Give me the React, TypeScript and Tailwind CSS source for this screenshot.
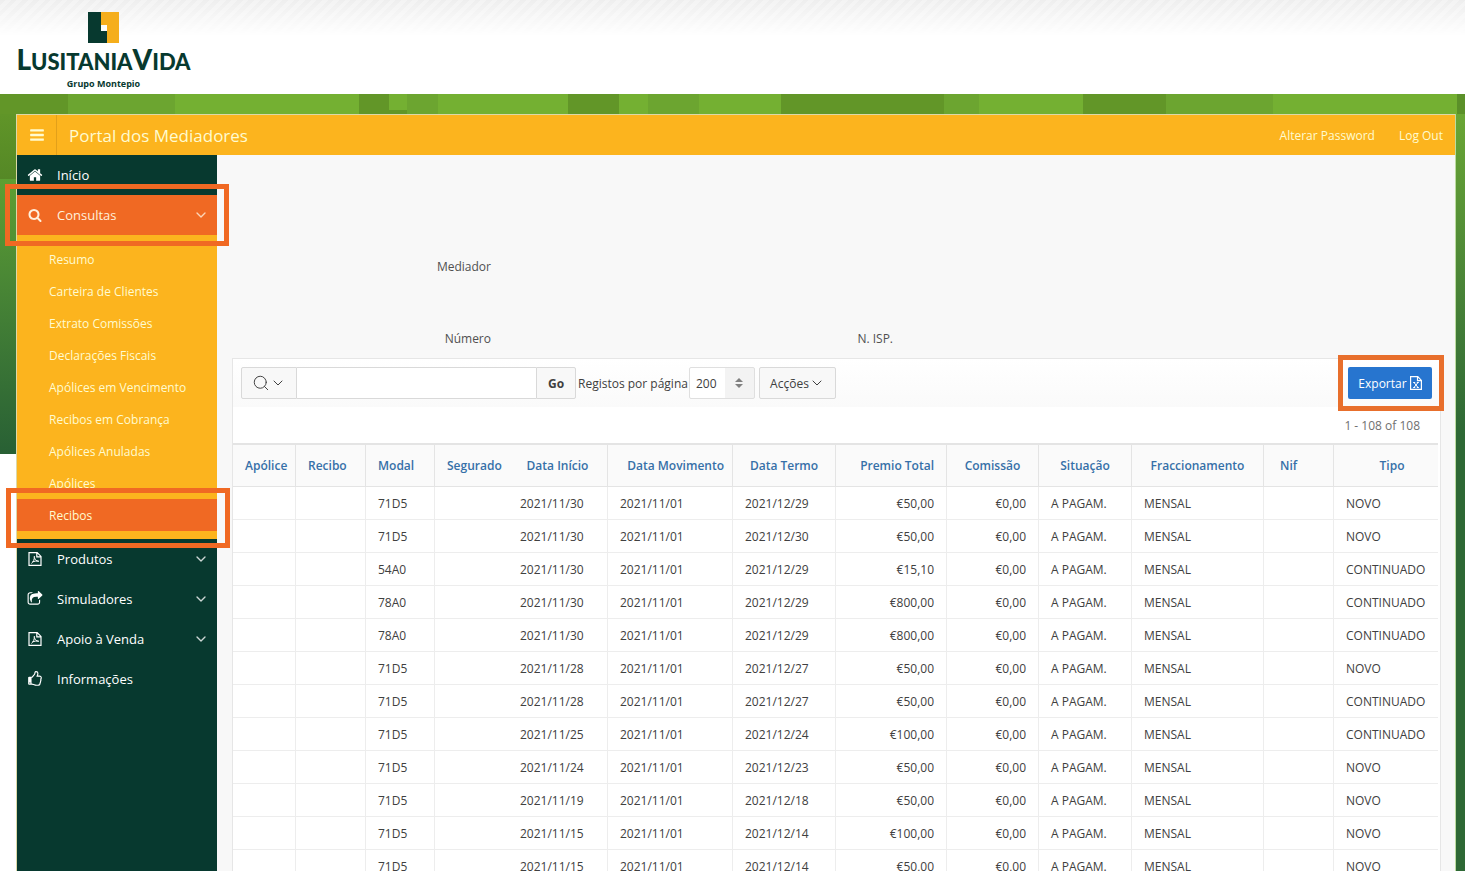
import React from 'react';
import { ChevronDown, Search } from 'lucide-react';

const ICONS = {
  home: 'M1472 992v480q0 26-19 45t-45 19h-384v-384h-256v384h-384q-26 0-45-19t-19-45v-480q0-1 .5-3t.5-3l575-474 575 474q1 2 1 6zm223-69l-62 74q-8 9-21 11h-3q-13 0-21-7l-692-577-692 577q-12 8-24 7-13-2-21-11l-62-74q-8-10-7-23.5t11-21.5l719-599q32-26 76-26t76 26l244 204v-195q0-14 9-23t23-9h192q14 0 23 9t9 23v408l219 182q10 8 11 21.5t-7 23.5z',
  search: 'M1216 832q0-185-131.5-316.5t-316.5-131.5-316.5 131.5-131.5 316.5 131.5 316.5 316.5 131.5 316.5-131.5 131.5-316.5zm512 832q0 52-38 90t-90 38q-54 0-90-38l-343-342q-179 124-399 124-143 0-273.5-55.5t-225-150-150-225-55.5-273.5 55.5-273.5 150-225 225-150 273.5-55.5 273.5 55.5 225 150 150 225 55.5 273.5q0 220-124 399l343 343q37 37 37 90z',
  bars: 'M1664 1344v128q0 26-19 45t-45 19h-1408q-26 0-45-19t-19-45v-128q0-26 19-45t45-19h1408q26 0 45 19t19 45zm0-512v128q0 26-19 45t-45 19h-1408q-26 0-45-19t-19-45v-128q0-26 19-45t45-19h1408q26 0 45 19t19 45zm0-512v128q0 26-19 45t-45 19h-1408q-26 0-45-19t-19-45v-128q0-26 19-45t45-19h1408q26 0 45 19t19 45z',
  share: 'M1472 989v259q0 119-84.5 203.5t-203.5 84.5h-832q-119 0-203.5-84.5t-84.5-203.5v-832q0-119 84.5-203.5t203.5-84.5h255q13 0 22.5 9.5t9.5 22.5q0 27-26 32-77 26-133 60-10 4-16 4h-112q-66 0-113 47t-47 113v832q0 66 47 113t113 47h832q66 0 113-47t47-113v-214q0-19 18-29 28-13 54-37 16-16 35-8 21 9 21 29zm237-496l-384 384q-18 19-45 19-12 0-25-5-39-17-39-59v-192h-160q-323 0-438 131-119 137-74 473 3 23-20 34-8 2-12 2-16 0-26-13-10-14-21-31t-39.5-68.5-49.5-99.5-38.5-114-17.5-122q0-49 3.5-91t14-90 28-88 47-81.5 68.5-74 94.5-61.5 124.5-48.5 159.5-30.5 196.5-11h160v-192q0-42 39-59 13-5 25-5 26 0 45 19l384 384q19 19 19 45t-19 45z',
  thumb: 'M384 1344q0-26-19-45t-45-19-45 19-19 45 19 45 45 19 45-19 19-45zm1152-576q0-51-39-89.5t-89-38.5h-352q0-58 48-159.5t48-160.5q0-98-32-145t-128-47q-26 26-38 85t-30.5 125.5-59.5 109.5q-22 23-77 91-4 5-23 30t-31.5 41-34.5 42.5-40 44-38.5 35.5-40 27-35.5 9h-32v640h32q13 0 31.5 3t33 6.5 38 11 35 11.5 35.5 12.5 29 10.5q211 73 342 73h121q192 0 192-167 0-26-5-56 30-16 47.5-52.5t17.5-73.5-18-69q53-50 53-119 0-25-10-55.5t-25-47.5q32-1 53.5-47t21.5-81zm128-1q0 89-49 163 9 33 9 69 0 77-38 144 3 21 3 43 0 101-60 178 1 139-85 219.5t-227 80.5h-129q-96 0-189.5-22.5t-216.5-65.5q-116-40-138-40h-288q-53 0-90.5-37.5t-37.5-90.5v-640q0-53 37.5-90.5t90.5-37.5h274q36-24 137-155 58-75 107-128 24-25 35.5-85.5t30.5-126.5 62-108q39-37 90-37 84 0 151 32.5t102 101.5 35 186q0 93-48 192h176q104 0 180 76t76 179z',
};

const Icon: React.FC<{ name: keyof typeof ICONS; className?: string }> = ({ name, className = 'size-4' }) => (
  <svg viewBox="0 0 1792 1792" fill="currentColor" className={className} aria-hidden="true">
    <path d={ICONS[name]} />
  </svg>
);

const PdfIcon = () => (
  <svg viewBox="0 0 14 14" fill="none" stroke="currentColor" className="size-[14px]" aria-hidden="true">
    <path d="M1 .6h8.2L13 4.4v9H1z M8.8.6v4.2H13" strokeWidth="1.2" />
    <path d="M3.4 11.4C5.4 10 6.6 7.4 6.3 4 M6.4 5.5C7 8 8.5 9.2 10.8 9.5 M4.5 9.9C6.2 9.2 8.3 8.8 10.6 8.9" />
  </svg>
);

const ExcelIcon = () => (
  <svg viewBox="0 0 12 14" fill="none" stroke="currentColor" className="h-[14px] w-3" aria-hidden="true">
    <path d="M.6.6h7.2l3.6 3.8v9H.6z M7.5.6v4.1h4" strokeWidth="1.2" />
    <path d="M4 6.5l4 5M8 6.5l-4 5M3.2 6.5h2M6.8 6.5h2M3.2 11.5h2M6.8 11.5h2" />
  </svg>
);

// Faixa verde do topo: blocos alternados de tons
const BAND = [
  'w-[68px] bg-[#629628]',
  'w-[107px] bg-[#6ca530]',
  'w-[184px] bg-[#74b032]',
  'w-[30px] bg-[#629628]',
  'w-[18px] bg-[#74b032] border-b-4 border-[#629628]',
  'w-[31px] bg-[#6ca530]',
  'w-[130px] bg-[#74b032]',
  'w-[51px] bg-[#629628]',
  'w-[29px] bg-[#74b032]',
  'w-[51px] bg-[#6ca530]',
  'w-[82px] bg-[#74b032]',
  'w-[163px] bg-[#629628]',
  'w-[35px] bg-[#6ca530]',
  'w-[104px] bg-[#74b032]',
  'w-[83px] bg-[#629628]',
  'w-[107px] bg-[#6ca530]',
  'flex-1 bg-[#74b032]',
  'w-2 bg-[#5b9029]',
];

const CONSULTAS = [
  'Resumo',
  'Carteira de Clientes',
  'Extrato Comissões',
  'Declarações Fiscais',
  'Apólices em Vencimento',
  'Recibos em Cobrança',
  'Apólices Anuladas',
  'Apólices',
  'Recibos',
];

const COLUMNS = [
  { title: 'Apólice', width: 'w-[62px]', head: 'text-left pl-3' },
  { title: 'Recibo', width: 'w-[70px]', head: 'text-left pl-3 border-l' },
  { title: 'Modal', width: 'w-[69px]', head: 'text-left pl-3 border-l' },
  { title: 'Segurado', width: 'w-[74px]', head: 'text-left pl-3 border-l' },
  { title: 'Data Início', width: 'w-[99px]', head: 'text-center' },
  { title: 'Data Movimento', width: 'w-[125px]', head: 'text-right pr-2 border-l' },
  { title: 'Data Termo', width: 'w-[103px]', head: 'text-center border-l' },
  { title: 'Premio Total', width: 'w-[111px]', head: 'text-right pr-3 border-l' },
  { title: 'Comissão', width: 'w-[92px]', head: 'text-center border-l' },
  { title: 'Situação', width: 'w-[93px]', head: 'text-center border-l' },
  { title: 'Fraccionamento', width: 'w-[132px]', head: 'text-center border-l' },
  { title: 'Nif', width: 'w-[70px]', head: 'text-left pl-4 border-l' },
  { title: 'Tipo', width: 'w-[105px]', head: 'text-center pl-3 border-l' },
];

// modal, data início, data movimento, data termo, prémio, tipo
const ROWS = [
  ['71D5', '2021/11/30', '2021/11/01', '2021/12/29', '€50,00', 'NOVO'],
  ['71D5', '2021/11/30', '2021/11/01', '2021/12/30', '€50,00', 'NOVO'],
  ['54A0', '2021/11/30', '2021/11/01', '2021/12/29', '€15,10', 'CONTINUADO'],
  ['78A0', '2021/11/30', '2021/11/01', '2021/12/29', '€800,00', 'CONTINUADO'],
  ['78A0', '2021/11/30', '2021/11/01', '2021/12/29', '€800,00', 'CONTINUADO'],
  ['71D5', '2021/11/28', '2021/11/01', '2021/12/27', '€50,00', 'NOVO'],
  ['71D5', '2021/11/28', '2021/11/01', '2021/12/27', '€50,00', 'CONTINUADO'],
  ['71D5', '2021/11/25', '2021/11/01', '2021/12/24', '€100,00', 'CONTINUADO'],
  ['71D5', '2021/11/24', '2021/11/01', '2021/12/23', '€50,00', 'NOVO'],
  ['71D5', '2021/11/19', '2021/11/01', '2021/12/18', '€50,00', 'NOVO'],
  ['71D5', '2021/11/15', '2021/11/01', '2021/12/14', '€100,00', 'NOVO'],
  ['71D5', '2021/11/15', '2021/11/01', '2021/12/14', '€50,00', 'NOVO'],
];

const Logo = () => (
  <div className="flex w-[175px] flex-col items-center text-[#07392f]">
    <svg viewBox="0 0 31 31" className="size-[31px]" aria-hidden="true">
      <path d="M0 0h13v19h6v12H0z" fill="#07392f" />
      <path d="M13 0h18v31H19V13h-6z" fill="#f5ae1c" />
    </svg>
    <div className="font-[Lato,sans-serif] text-[22px] leading-8 font-black whitespace-nowrap">
      <span className="text-[28px]">L</span>USITANIA<span className="text-[28px]">V</span>IDA
    </div>
    <div className="text-[9px] leading-3 font-bold">Grupo Montepio</div>
  </div>
);

const MenuItem: React.FC<{ icon: React.ReactNode; label: string; expandable?: boolean; active?: boolean }> = ({
  icon,
  label,
  expandable,
  active,
}) => (
  <button
    className={`flex h-10 w-full items-center pr-2 pl-[10px] text-[13px] ${active ? 'bg-[#f06923] text-[#fff0dc]' : 'text-white'}`}
  >
    <span className="flex w-4 justify-center">{icon}</span>
    <span className="ml-[14px] flex-1 pt-0.5 text-left">{label}</span>
    {expandable && <ChevronDown className="size-4 opacity-80" strokeWidth={2} />}
  </button>
);

const Sidebar = () => (
  <nav className="w-[200px] shrink-0 bg-[#07392f]">
    <MenuItem icon={<Icon name="home" />} label="Início" />
    <div className="relative z-10">
      <MenuItem icon={<Icon name="search" className="size-[14px]" />} label="Consultas" expandable active />
      <div className="pointer-events-none absolute -inset-x-3 -inset-y-[11px] border-[5px] border-[#f06923]" />
    </div>
    <ul className="bg-[#fcb41e] py-2 text-[12px] text-[#fffbd0]">
      {CONSULTAS.map((item) => {
        const current = item === 'Recibos';
        return (
          <li key={item} className="relative">
            <a href="#" className={`flex h-8 items-center pt-0.5 pl-8 ${current ? 'bg-[#f06923]' : ''}`}>
              {item}
            </a>
            {current && (
              <div className="pointer-events-none absolute -top-[11px] -right-[13px] -bottom-[17px] -left-[11px] z-10 border-[5px] border-[#f06923]" />
            )}
          </li>
        );
      })}
    </ul>
    <MenuItem icon={<PdfIcon />} label="Produtos" expandable />
    <MenuItem icon={<Icon name="share" />} label="Simuladores" expandable />
    <MenuItem icon={<PdfIcon />} label="Apoio à Venda" expandable />
    <MenuItem icon={<Icon name="thumb" />} label="Informações" />
  </nav>
);

const Toolbar = () => (
  <div className="flex items-center bg-linear-to-b from-white to-[#fafafa] p-2 text-[12px] text-[#404040]">
    <button
      aria-label="Pesquisar coluna"
      className="flex h-8 w-14 items-center justify-center rounded-l-xs border border-[#d9d9d9] bg-[#f8f8f8]"
    >
      <Search className="size-[18px]" strokeWidth={1.3} />
      <ChevronDown className="size-4" strokeWidth={1.5} />
    </button>
    <input
      type="text"
      aria-label="Pesquisar"
      className="h-8 w-[239px] border-y border-[#d9d9d9] bg-white px-2 outline-none"
    />
    <button className="h-8 w-10 rounded-r-xs border border-[#d9d9d9] bg-[#f8f8f8] pt-0.5 font-bold">Go</button>
    <label htmlFor="registos" className="ml-0.5 w-[111px] pt-0.5 whitespace-nowrap">
      Registos por página
    </label>
    <div className="relative">
      <select
        id="registos"
        defaultValue="200"
        className="h-8 w-[66px] appearance-none rounded-xs border border-[#dfdfdf] bg-linear-to-r from-white from-[35px] to-[#f3f3f3] to-[35px] pt-0.5 pl-1.5"
      >
        <option>200</option>
      </select>
      <svg
        viewBox="0 0 8 10"
        fill="#808080"
        className="pointer-events-none absolute top-[11px] right-3 h-[10px] w-2"
        aria-hidden="true"
      >
        <path d="M4 0l4 4H0zM4 10l4-4H0z" />
      </svg>
    </div>
    <button className="ml-1 flex h-8 w-[77px] items-center justify-center rounded-xs border border-[#d9d9d9] bg-[#f8f8f8]">
      <span className="pt-0.5">Acções</span>
      <ChevronDown className="size-4" strokeWidth={1.5} />
    </button>
    <div className="relative ml-auto">
      <button className="flex h-8 w-[84px] items-center justify-center gap-[3px] rounded-xs bg-[#2775cf] text-white">
        <span className="pt-0.5">Exportar</span>
        <ExcelIcon />
      </button>
      <div className="pointer-events-none absolute -inset-y-3 -right-3 -left-[10px] border-[5px] border-[#e86f2c]" />
    </div>
  </div>
);

const Report = () => (
  <table className="w-full table-fixed border-separate border-spacing-0 text-[12px]">
    <thead>
      <tr className="h-11 bg-[#fafafa] text-[#3670a8]">
        {COLUMNS.map((col) => (
          <th
            key={col.title}
            className={`border-t-2 border-b border-[#e4e4e4] font-semibold whitespace-nowrap ${col.width} ${col.head}`}
          >
            {col.title}
          </th>
        ))}
      </tr>
    </thead>
    <tbody className="text-[#404040]">
      {ROWS.map(([modal, inicio, movimento, termo, premio, tipo], i) => {
        const cells = ['', '', modal, '', inicio, movimento, termo, premio, '€0,00', 'A PAGAM.', 'MENSAL', '', tipo];
        return (
          <tr key={i} className="h-[33px]">
            {cells.map((value, c) => (
              <td
                key={c}
                className={`border-b border-[#ededed] pt-0.5 pl-3 whitespace-nowrap ${c === 0 || c === 4 ? '' : 'border-l'} ${c === 7 || c === 8 ? 'pr-3 text-right' : ''}`}
              >
                {value}
              </td>
            ))}
          </tr>
        );
      })}
    </tbody>
  </table>
);

export default function App() {
  return (
    <div className="flex h-screen flex-col overflow-hidden bg-white pr-[3px] font-['Open_Sans',sans-serif]">
      <header className="relative h-[94px] shrink-0 px-4 pt-3">
        <div className="absolute inset-x-0 top-0 h-9 bg-[repeating-linear-gradient(135deg,#eeeeee_0_4px,#f3f3f3_4px_8px)] mask-b-from-0%" />
        <div className="relative">
          <Logo />
        </div>
      </header>

      <div className="flex h-5 shrink-0">
        {BAND.map((block, i) => (
          <div key={i} className={block} />
        ))}
      </div>

      <div className="flex min-h-0 flex-1">
        <div className="w-4 shrink-0">
          <div className="h-[65px] bg-linear-to-b from-[#609528] to-[#558826]" />
          <div className="h-[275px] bg-linear-to-b from-[#5e9f32] to-[#286034]" />
        </div>

        <div className="flex min-w-0 flex-1 flex-col border-t border-l border-[#dcd9a8]">
          <div className="flex h-10 shrink-0 items-center bg-[#fcb41e] text-[#fffbd0]">
            <button aria-label="Menu" className="flex h-10 w-10 items-center justify-center border-r border-[#e2a01a]">
              <Icon name="bars" />
            </button>
            <h1 className="ml-3 flex-1 pt-0.5 text-[17px]">Portal dos Mediadores</h1>
            <div className="flex gap-6 pt-0.5 pr-3 text-[12px]">
              <a href="#">Alterar Password</a>
              <a href="#">Log Out</a>
            </div>
          </div>

          <div className="flex min-h-0 flex-1">
            <Sidebar />
            <main className="min-w-0 flex-1 bg-[#f8f8f8] pr-[14px] pl-[15px]">
              <div className="grid grid-cols-[259px_402px] gap-y-[54px] pt-[103px] pb-[10px] text-right text-[12px] leading-[18px] text-[#505050]">
                <span className="col-start-1">Mediador</span>
                <span className="col-start-1">Número</span>
                <span>N. ISP.</span>
              </div>
              <section className="border border-[#e6e6e6] bg-white">
                <Toolbar />
                <div className="flex h-9 items-center justify-end pt-0.5 pr-5 text-[12px] text-[#707070]">
                  1 - 108 of 108
                </div>
                <div className="pr-[2px]">
                  <Report />
                </div>
              </section>
            </main>
          </div>
        </div>

        <div className="w-[10px] shrink-0 border-l border-[#bcdca0] bg-linear-to-b from-[#6aa634] to-[#2e6835] to-[320px]" />
      </div>
    </div>
  );
}
